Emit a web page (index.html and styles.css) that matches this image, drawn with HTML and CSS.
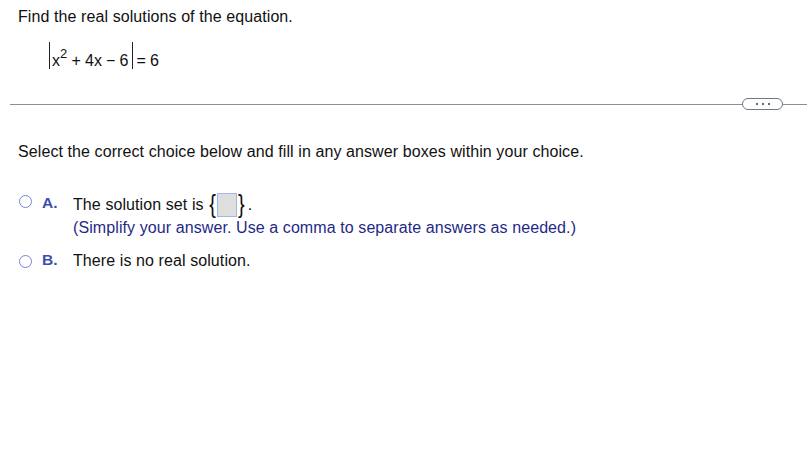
FILE: index.html
```html
<!DOCTYPE html>
<html>
<head>
<meta charset="utf-8">
<link rel="stylesheet" href="styles.css">
</head>
<body>
<div class="page">
  <div class="question">
    <p class="prompt">Find the real solutions of the equation.</p>
    <div class="equation">
      <span class="bar"></span>
      <span class="expr">x<sup>2</sup> + 4x − 6</span>
      <span class="bar bar-right"></span>
      <span class="rhs">= 6</span>
    </div>
  </div>
  <div class="divider">
    <span class="rule"></span>
    <span class="pill"><span class="dot"></span><span class="dot"></span><span class="dot"></span></span>
    <span class="rule tail"></span>
  </div>
  <div class="answer">
    <p class="instruction">Select the correct choice below and fill in any answer boxes within your choice.</p>
    <div class="choice choice-a">
      <span class="radio"></span>
      <span class="letter">A.</span>
      <div class="body">
        <div class="line">The solution set is <span class="brace">{</span><span class="box"></span><span class="brace">}</span><span class="period">.</span></div>
        <div class="hint">(Simplify your answer. Use a comma to separate answers as needed.)</div>
      </div>
    </div>
    <div class="choice choice-b">
      <span class="radio"></span>
      <span class="letter">B.</span>
      <div class="body">
        <div class="line">There is no real solution.</div>
      </div>
    </div>
  </div>
</div>
</body>
</html>
```

FILE: styles.css
```css
html, body {
  margin: 0;
  padding: 0;
  background: #ffffff;
}
body {
  font-family: "Liberation Sans", Arial, sans-serif;
  font-size: 16px;
  letter-spacing: 0.09px;
  color: #111111;
}
.page {
  width: 807px;
  height: 462px;
  overflow: hidden;
}
.question {
  padding: 8px 0 0 18px;
}
.prompt {
  margin: 0;
  line-height: 18px;
}
.equation {
  display: flex;
  align-items: flex-start;
  margin: 15px 0 0 31px;
  height: 28px;
  font-size: 16px;
  word-spacing: -0.5px;
}
.bar {
  display: block;
  flex: none;
  width: 1px;
  height: 27px;
  margin-top: 1px;
  background: #222;
}
.expr {
  line-height: 18px;
  padding: 11px 0 0 2px;
  white-space: pre;
}
.expr sup {
  font-size: 13px;
  vertical-align: 0;
  position: relative;
  top: -8px;
}
.bar-right {
  margin-left: 3px;
}
.rhs {
  line-height: 18px;
  padding: 11px 0 0 4px;
  white-space: pre;
}
.divider {
  display: flex;
  align-items: center;
  margin: 29px 0 0 10px;
  height: 12px;
}
.rule {
  flex: 1;
  height: 1px;
  background: #878e9c;
}
.rule.tail {
  flex: 0 0 24px;
}
.pill {
  display: flex;
  align-items: center;
  justify-content: center;
  gap: 4px;
  width: 39px;
  height: 10px;
  border: 1px solid #6f7684;
  border-radius: 6px;
  background: #fff;
}
.dot {
  width: 2px;
  height: 2px;
  background: #5f6672;
}
.answer {
  padding: 0 0 0 18px;
}
.instruction {
  margin: 33px 0 0 0;
  line-height: 18px;
}
.choice {
  display: flex;
  align-items: flex-start;
}
.choice-a {
  margin-top: 35px;
}
.choice-b {
  margin-top: 15px;
}
.radio {
  box-sizing: border-box;
  width: 13px;
  height: 13px;
  margin: 3px 0 0 1px;
  border: 1.6px solid #7486d4;
  border-radius: 50%;
  flex: none;
}
.choice-a .radio {
  margin-top: -1px;
}
.letter {
  width: 31px;
  margin-left: 10px;
  font-size: 15.5px;
  font-weight: bold;
  color: #3b4db0;
  line-height: 18px;
  flex: none;
  position: relative;
  top: -1px;
}
.choice-a .letter {
  top: -2px;
}
.body {
  line-height: 18px;
}
.line {
  display: flex;
  align-items: center;
  height: 18px;
  white-space: pre;
}
.brace {
  font-size: 20px;
  line-height: 18px;
  margin: 0 1px;
  transform: scaleY(1.3);
  position: relative;
  top: -1px;
}
.period {
  margin-left: 2px;
}
.box {
  box-sizing: border-box;
  width: 20px;
  height: 24px;
  background: #dedede;
  border: 1px solid #9fb6e6;
}
.hint {
  margin-top: 5px;
  color: #1f2a86;
}
```
